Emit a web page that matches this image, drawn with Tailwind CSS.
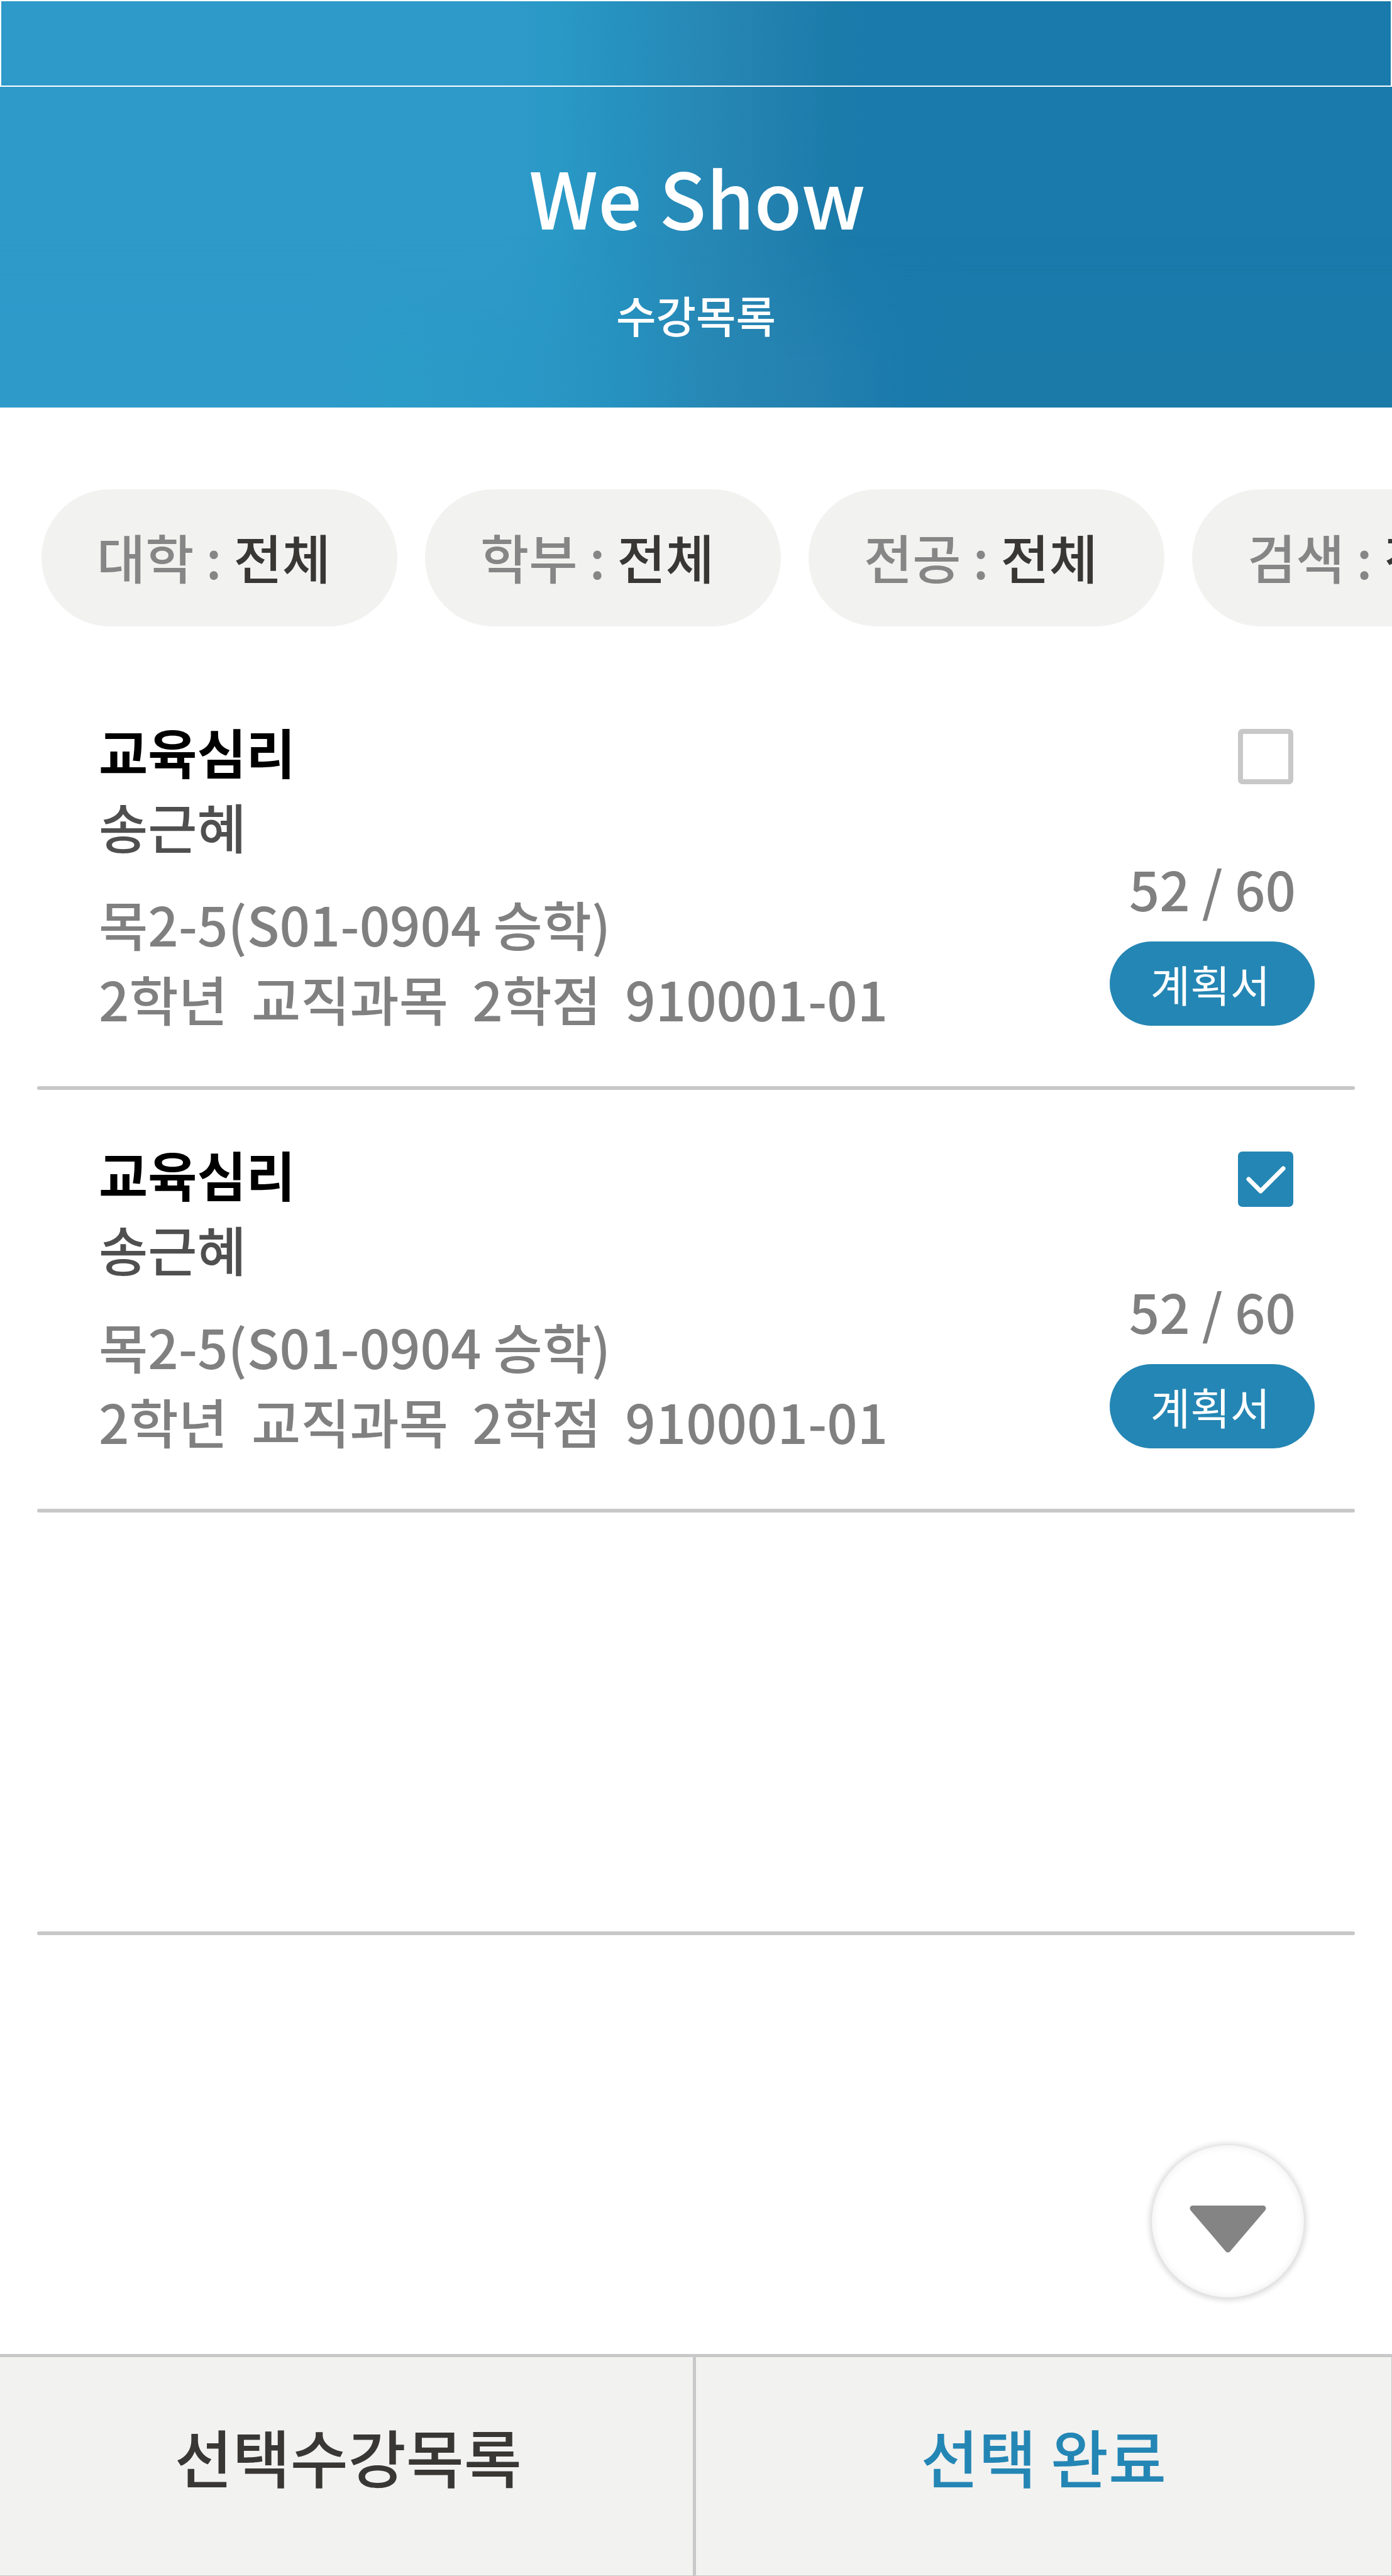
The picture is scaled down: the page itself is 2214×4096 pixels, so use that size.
<!DOCTYPE html>
<html lang="ko">
<head>
<meta charset="utf-8">
<meta name="viewport" content="width=device-width, initial-scale=1">
<title>We Show - 수강목록</title>
<script src="https://cdn.jsdelivr.net/npm/@tailwindcss/browser@4"></script>
</head>
<body class="flex min-h-screen flex-col overflow-x-hidden bg-white font-['Noto_Sans_CJK_JP','Noto_Sans_CJK_KR',sans-serif] font-medium [font-feature-settings:'locl'_0]">

<header class="relative bg-[linear-gradient(90deg,#2e9aca_0%,#2e9aca_36%,#2a99c6_40%,#2692c0_44%,#2787b4_51%,#2280af_56%,#1b7ba9_60%,#1a7aab_62%,#1a7aab_100%)] text-center text-white">
  <!-- wider blend towards the lower edge -->
  <div class="absolute inset-0 bg-[linear-gradient(90deg,#2e9aca_0%,#2e9aca_22%,#2b9bc8_28%,#2a98c6_38%,#2692c0_44%,#2786b3_52%,#2481b0_58%,#1a7aab_65%,#1b7aa8_70%,#1b7aa8_100%)] mask-[linear-gradient(180deg,transparent_58%,#000_88%)]"></div>
  <div class="relative h-[138px] border-2 border-white"></div>
  <h1 class="relative mt-[83px] pl-1 text-[123px] leading-[180px]">We Show</h1>
  <p class="relative mt-[49px] pb-[98px] text-[69px] leading-[100px]">수강목록</p>
</header>

<main class="flex flex-1 flex-col">
  <nav aria-label="필터" class="mt-[130px] flex gap-[44px] overflow-hidden pl-[66px] text-[84px] leading-[120px] text-[#868686]">
    <button type="button" class="h-[218px] w-[566px] shrink-0 rounded-full bg-[#f2f2f1] pb-1 pl-[88px] text-left whitespace-nowrap">대학 : <span class="text-[#393734]">전체</span></button>
    <button type="button" class="h-[218px] w-[566px] shrink-0 rounded-full bg-[#f2f2f1] pb-1 pl-[88px] text-left whitespace-nowrap">학부 : <span class="text-[#393734]">전체</span></button>
    <button type="button" class="h-[218px] w-[566px] shrink-0 rounded-full bg-[#f2f2f1] pb-1 pl-[88px] text-left whitespace-nowrap">전공 : <span class="text-[#393734]">전체</span></button>
    <button type="button" class="h-[218px] w-[566px] shrink-0 rounded-full bg-[#f2f2f1] pb-1 pl-[88px] text-left whitespace-nowrap">검색 : <span class="text-[#393734]">전체</span></button>
  </nav>

  <ul class="mt-[65px] px-[59px] text-[85px] leading-[119px] text-[#808080]">
    <li class="flex min-h-[672px] flex-col">
      <div class="flex flex-1 justify-between pr-[64px] pl-[98px]">
        <div class="pt-[73px]">
          <h2 class="font-bold text-black"><label for="course-1">교육심리</label></h2>
          <p class="text-[#4f4f4f]">송근혜</p>
          <p class="mt-[36px]">목2-5(S01-0904 승학)</p>
          <p class="whitespace-pre">2학년  교직과목  2학점  910001-01</p>
        </div>
        <div class="flex flex-col items-end pt-[98px]">
          <span class="relative mr-[34px] block size-[88px]">
            <input id="course-1" type="checkbox" class="peer block size-full appearance-none rounded-[7px] border-8 border-[#c8c8c8] checked:border-[#2486b4] checked:bg-[#2486b4]">
            <svg viewBox="0 0 88 88" class="pointer-events-none absolute inset-0 hidden size-full peer-checked:block" fill="none" stroke="#fff" stroke-width="7" stroke-linecap="round" stroke-linejoin="round"><path d="M17 44 36 63 72 27"/></svg>
          </span>
          <p class="mt-[105px] mr-[30px]">52 / 60</p>
          <button type="button" class="mt-[26px] h-[134px] w-[326px] rounded-full bg-[#2486b4] pr-[6px] text-[69px] leading-[100px] font-normal text-white">계획서</button>
        </div>
      </div>
      <hr class="h-[6px] rounded-full border-0 bg-[#c8c8c8]">
    </li>
    <li class="flex min-h-[672px] flex-col">
      <div class="flex flex-1 justify-between pr-[64px] pl-[98px]">
        <div class="pt-[73px]">
          <h2 class="font-bold text-black"><label for="course-2">교육심리</label></h2>
          <p class="text-[#4f4f4f]">송근혜</p>
          <p class="mt-[36px]">목2-5(S01-0904 승학)</p>
          <p class="whitespace-pre">2학년  교직과목  2학점  910001-01</p>
        </div>
        <div class="flex flex-col items-end pt-[98px]">
          <span class="relative mr-[34px] block size-[88px]">
            <input id="course-2" type="checkbox" checked class="peer block size-full appearance-none rounded-[7px] border-8 border-[#c8c8c8] checked:border-[#2486b4] checked:bg-[#2486b4]">
            <svg viewBox="0 0 88 88" class="pointer-events-none absolute inset-0 hidden size-full peer-checked:block" fill="none" stroke="#fff" stroke-width="7" stroke-linecap="round" stroke-linejoin="round"><path d="M17 44 36 63 72 27"/></svg>
          </span>
          <p class="mt-[105px] mr-[30px]">52 / 60</p>
          <button type="button" class="mt-[26px] h-[134px] w-[326px] rounded-full bg-[#2486b4] pr-[6px] text-[69px] leading-[100px] font-normal text-white">계획서</button>
        </div>
      </div>
      <hr class="h-[6px] rounded-full border-0 bg-[#c8c8c8]">
    </li>
    <li class="flex min-h-[672px] flex-col justify-end">
      <hr class="h-[6px] rounded-full border-0 bg-[#c8c8c8]">
    </li>
  </ul>

  <button type="button" aria-label="아래로" class="mt-auto mr-[140px] mb-[90px] size-[242px] self-end rounded-full bg-white shadow-[0_1px_8px_4px_rgba(0,0,0,0.14),inset_0_0_14px_rgba(0,0,0,0.08)]">
    <svg viewBox="0 0 242 242" class="size-full" fill="#848484" stroke="#848484" stroke-width="9" stroke-linejoin="round"><path d="M65 100.500H177L121 166Z"/></svg>
  </button>
</main>

<footer class="grid h-[353px] grid-cols-2 border-t-[5px] border-r border-b border-[#c8c8c8] bg-[#f2f2f1] text-[100px] leading-[140px]">
  <button type="button" class="border-r-[5px] border-[#c8c8c8] pb-[34px] pl-[6px] text-[#393734]">선택수강목록</button>
  <button type="button" class="pb-[34px] text-[#2486b4]">선택 완료</button>
</footer>

</body>
</html>
